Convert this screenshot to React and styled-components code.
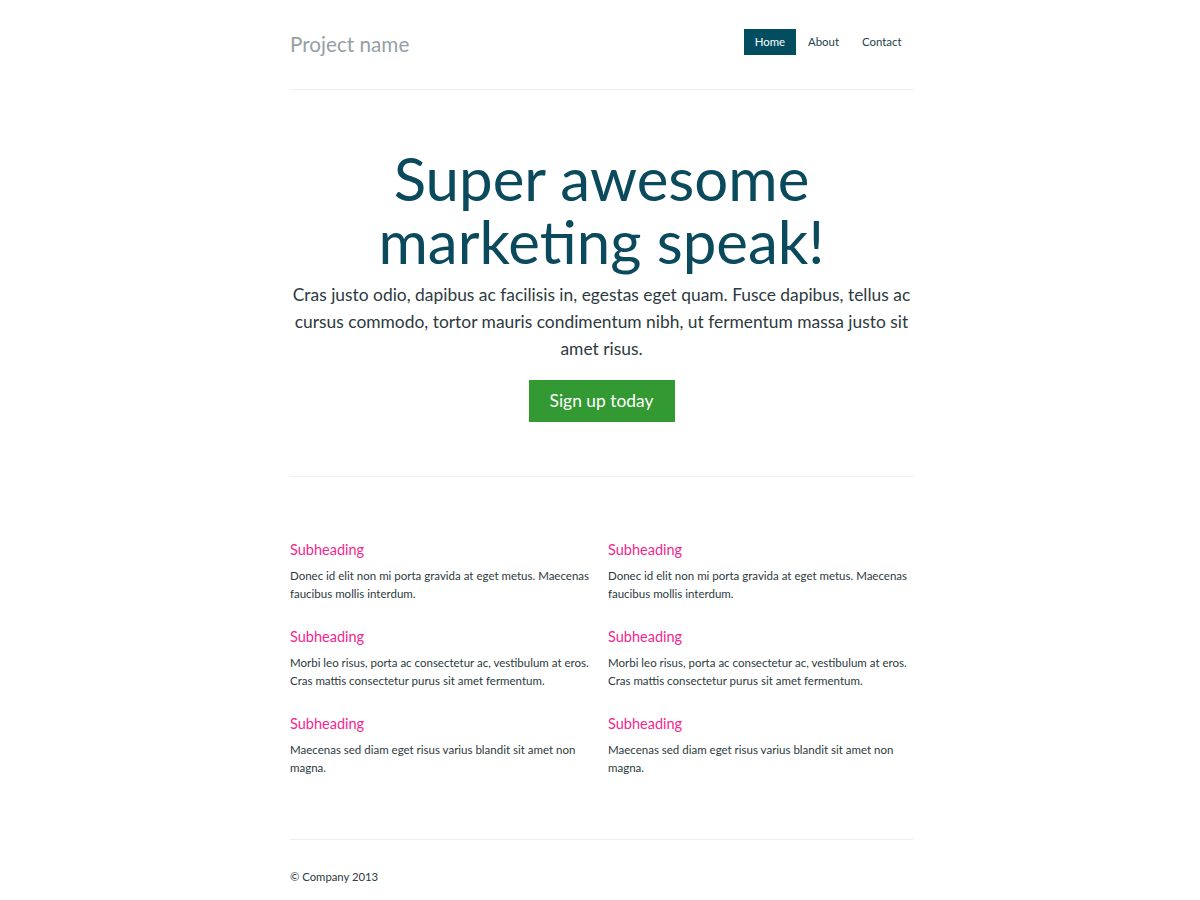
import React from "react";
import styled, { createGlobalStyle } from "styled-components";

const GlobalStyle = createGlobalStyle`
  html, body {
    margin: 0;
    padding: 0;
    background: #fff;
  }
  body {
    font-family: Lato, "Open Sans", sans-serif;
    color: #2d3a40;
  }
`;

const Container = styled.div`
  width: 623px;
  margin: 0 auto;
  padding-left: 3px;
`;

const Masthead = styled.header`
  display: flex;
  justify-content: space-between;
  align-items: flex-start;
  height: 89px;
  border-bottom: 1px solid #eeeeee;
`;

const Brand = styled.h3`
  margin: 32px 0 0;
  font-size: 20.7px;
  font-weight: 400;
  line-height: 24px;
  color: #95a0a3;
`;

const Nav = styled.nav`
  display: flex;
  gap: 2px;
  margin-top: 29px;
  margin-right: 1px;
`;

const NavLink = styled.a`
  display: block;
  height: 26px;
  line-height: 26px;
  padding: 0 10.5px;
  font-size: 11.4px;
  text-decoration: none;
  color: ${({ $active }) => ($active ? "#ffffff" : "#1f3f4a")};
  background: ${({ $active }) => ($active ? "#024e60" : "transparent")};
`;

const Hero = styled.section`
  text-align: center;
  padding: 57px 0 54px;
  border-bottom: 1px solid #eeeeee;
`;

const Title = styled.h1`
  margin: 0 0 8px;
  font-size: 60px;
  font-weight: 400;
  line-height: 63px;
  color: #0a4a5c;
`;

const Lead = styled.p`
  margin: 0 0 18px;
  font-size: 17.4px;
  line-height: 27px;
  color: #2d3a40;
`;

const SignUp = styled.a`
  display: inline-block;
  width: 146px;
  height: 42px;
  line-height: 42px;
  font-size: 17.4px;
  color: #fff;
  background: #339933;
  text-decoration: none;
`;

const Marketing = styled.section`
  display: grid;
  grid-template-columns: 1fr 1fr;
  column-gap: 13px;
  padding: 63px 0 62px;
  border-bottom: 1px solid #eeeeee;
`;

const Column = styled.div`
  display: flex;
  flex-direction: column;
  gap: 24px;
`;

const Item = styled.div``;

const Subheading = styled.h4`
  margin: 0 0 7px;
  font-size: 14.5px;
  font-weight: 400;
  line-height: 20px;
  color: #f5278f;
`;

const Text = styled.p`
  margin: 0;
  font-size: 11.5px;
  line-height: 18px;
  color: #2d3a40;
`;

const Footer = styled.footer`
  padding: 30px 0 20px;
  font-size: 11.3px;
  color: #2d3a40;
`;

const items = [
  "Donec id elit non mi porta gravida at eget metus. Maecenas faucibus mollis interdum.",
  "Morbi leo risus, porta ac consectetur ac, vestibulum at eros. Cras mattis consectetur purus sit amet fermentum.",
  "Maecenas sed diam eget risus varius blandit sit amet non magna.",
];

export default function App() {
  return (
    <>
      <GlobalStyle />
      <Container>
        <Masthead>
          <Brand>Project name</Brand>
          <Nav>
            <NavLink href="#" $active>Home</NavLink>
            <NavLink href="#">About</NavLink>
            <NavLink href="#">Contact</NavLink>
          </Nav>
        </Masthead>

        <Hero>
          <Title>
            Super awesome
            <br />
            marketing speak!
          </Title>
          <Lead>
            Cras justo odio, dapibus ac facilisis in, egestas eget quam. Fusce
            dapibus, tellus ac cursus commodo, tortor mauris condimentum nibh,
            ut fermentum massa justo sit amet risus.
          </Lead>
          <SignUp href="#">Sign up today</SignUp>
        </Hero>

        <Marketing>
          {[0, 1].map((col) => (
            <Column key={col}>
              {items.map((t, i) => (
                <Item key={i}>
                  <Subheading>Subheading</Subheading>
                  <Text>{t}</Text>
                </Item>
              ))}
            </Column>
          ))}
        </Marketing>

        <Footer>© Company 2013</Footer>
      </Container>
    </>
  );
}
